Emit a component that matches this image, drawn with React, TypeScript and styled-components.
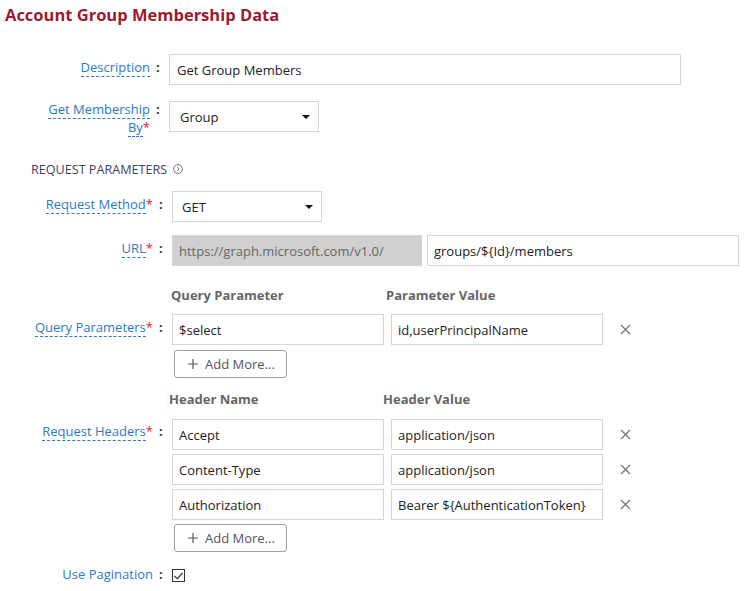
import styled, { createGlobalStyle } from "styled-components";

const GlobalStyle = createGlobalStyle`
  body {
    margin: 0;
    background: #fff;
    font-family: "Open Sans", "Liberation Sans", sans-serif;
    font-size: 13px;
    color: #222;
  }
`;

const Page = styled.div`
  width: 744px;
  padding: 4px 0 0 5px;
  box-sizing: border-box;
`;

const Title = styled.h2`
  margin: 0;
  font-size: 16.5px;
  line-height: 22px;
  font-weight: 700;
  color: #9a1b31;
`;

const Row = styled.div<{ $indent?: number; $top: number }>`
  display: grid;
  grid-template-columns: 145px 19px 1fr;
  align-items: start;
  margin-top: ${p => p.$top}px;
  margin-left: ${p => p.$indent || 0}px;
`;

const LabelCell = styled.div<{ $pad?: number }>`
  text-align: right;
  line-height: 18px;
  margin-top: ${p => p.$pad ?? 0}px;
  color: #2b79c9;
`;

const LabelText = styled.span`
  border-bottom: 1px dashed #2b79c9;
`;

const Req = styled.span`
  color: #e0222a;
`;

const Colon = styled.div<{ $pad?: number }>`
  margin-top: ${p => p.$pad ?? 0}px;
  padding-left: 6px;
  line-height: 18px;
  color: #333;
  font-weight: 700;
`;

const Content = styled.div`
  display: flex;
  flex-direction: column;
  gap: 4px;
  align-items: flex-start;
`;

const Field = styled.div<{ $w: number; $grey?: boolean; $padL?: number }>`
  width: ${p => p.$w}px;
  height: 31px;
  box-sizing: border-box;
  border: 1px solid #d5d5d5;
  background: ${p => (p.$grey ? "#d0d0d0" : "#fff")};
  color: ${p => (p.$grey ? "#666" : "#222")};
  padding-left: ${p => p.$padL ?? 6}px;
  display: flex;
  align-items: center;
  white-space: nowrap;
`;

const Select = styled(Field)`
  justify-content: space-between;
  padding-right: 8px;
  &::after {
    content: "";
    border-left: 4px solid transparent;
    border-right: 4px solid transparent;
    border-top: 4px solid #111;
  }
`;

const Pair = styled.div<{ $gap?: number }>`
  display: flex;
  align-items: center;
  gap: ${p => p.$gap ?? 7}px;
`;

const Remove = styled.span`
  display: flex;
  margin-left: 10px;
`;

const AddButton = styled.div<{ $mt?: number }>`
  width: 113px;
  height: 28px;
  box-sizing: border-box;
  margin: ${p => p.$mt ?? 0}px 0 0 2px;
  border: 1px solid #a0a0a0;
  border-radius: 3px;
  color: #555;
  display: flex;
  align-items: center;
  padding-left: 13px;
  gap: 7px;
`;

const ColHeads = styled.div<{ $top: number; $left: number; $gap: number }>`
  display: flex;
  margin: ${p => p.$top}px 0 0 ${p => p.$left}px;
  height: 18px;
  line-height: 18px;
  font-weight: 700;
  color: #666;
  & > span:first-child {
    width: ${p => p.$gap}px;
  }
`;

const Section = styled.div`
  margin: 24px 0 0 26px;
  height: 18px;
  display: flex;
  align-items: center;
  gap: 6px;
  font-size: 12.6px;
  color: #3c4262;
`;

const Check = styled.div`
  width: 13px;
  height: 13px;
  box-sizing: border-box;
  border: 1px solid #333;
  margin-top: 4px;
  display: flex;
  align-items: center;
  justify-content: center;
`;

const Cross = () => (
  <svg width="11" height="11" viewBox="0 0 11 11">
    <path d="M1 1 L10 10 M10 1 L1 10" stroke="#777" strokeWidth="1.3" />
  </svg>
);

const Plus = () => (
  <svg width="10" height="10" viewBox="0 0 10 10">
    <path d="M5 0 V10 M0 5 H10" stroke="#555" strokeWidth="1.2" />
  </svg>
);

const Label = ({ text, req }: { text: string; req?: boolean }) => (
  <>
    <LabelText>{text}</LabelText>
    {req && <Req>*</Req>}
  </>
);

const headers = [
  ["Accept", "application/json"],
  ["Content-Type", "application/json"],
  ["Authorization", "Bearer ${AuthenticationToken}"],
];

export default function App() {
  return (
    <Page>
      <GlobalStyle />
      <Title>Account Group Membership Data</Title>

      <Row $top={28}>
        <LabelCell $pad={4}>
          <Label text="Description" />
        </LabelCell>
        <Colon $pad={4}>:</Colon>
        <Content>
          <Field $w={512} $padL={7}>Get Group Members</Field>
        </Content>
      </Row>

      <Row $top={16}>
        <LabelCell $pad={-1}>
          <LabelText>Get Membership</LabelText>
          <br />
          <Label text="By" req />
        </LabelCell>
        <Colon $pad={-1}>:</Colon>
        <Content>
          <Select $w={150} $padL={10}>Group</Select>
        </Content>
      </Row>

      <Section>
        REQUEST PARAMETERS
        <svg width="10" height="10" viewBox="0 0 10 10">
          <circle cx="5" cy="5" r="4.4" fill="none" stroke="#666" strokeWidth="0.9" />
          <path d="M4 3 L6 5 L4 7" fill="none" stroke="#666" strokeWidth="0.9" />
        </svg>
      </Section>

      <Row $top={13} $indent={3}>
        <LabelCell $pad={4}>
          <Label text="Request Method" req />
        </LabelCell>
        <Colon $pad={4}>:</Colon>
        <Content>
          <Select $w={150} $padL={9}>GET</Select>
        </Content>
      </Row>

      <Row $top={13} $indent={3}>
        <LabelCell $pad={4}>
          <Label text="URL" req />
        </LabelCell>
        <Colon $pad={4}>:</Colon>
        <Content>
          <Pair $gap={5}>
            <Field $w={250} $grey>https://graph.microsoft.com/v1.0/</Field>
            <Field $w={312}>{"groups/${Id}/members"}</Field>
          </Pair>
        </Content>
      </Row>

      <ColHeads $top={20} $left={166} $gap={215}>
        <span>Query Parameter</span>
        <span>Parameter Value</span>
      </ColHeads>

      <Row $top={10} $indent={3}>
        <LabelCell $pad={4}>
          <Label text="Query Parameters" req />
        </LabelCell>
        <Colon $pad={4}>:</Colon>
        <Content>
          <Pair>
            <Field $w={212}>$select</Field>
            <Field $w={212}>id,userPrincipalName</Field>
            <Remove>
              <Cross />
            </Remove>
          </Pair>
          <AddButton $mt={1}>
            <Plus />
            Add More...
          </AddButton>
        </Content>
      </Row>

      <ColHeads $top={12} $left={164} $gap={214}>
        <span>Header Name</span>
        <span>Header Value</span>
      </ColHeads>

      <Row $top={11} $indent={3}>
        <LabelCell $pad={3}>
          <Label text="Request Headers" req />
        </LabelCell>
        <Colon $pad={3}>:</Colon>
        <Content>
          {headers.map(([name, value]) => (
            <Pair key={name}>
              <Field $w={212}>{name}</Field>
              <Field $w={212}>{value}</Field>
              <Remove>
                <Cross />
              </Remove>
            </Pair>
          ))}
          <AddButton>
            <Plus />
            Add More...
          </AddButton>
        </Content>
      </Row>

      <Row $top={13} $indent={3}>
        <LabelCell>
          <Label text="Use Pagination" />
        </LabelCell>
        <Colon>:</Colon>
        <Content>
          <Check>
            <svg width="9" height="8" viewBox="0 0 9 8">
              <path d="M0.5 4 L3.3 6.6 L8.5 1" fill="none" stroke="#333" strokeWidth="1.2" />
            </svg>
          </Check>
        </Content>
      </Row>
    </Page>
  );
}
